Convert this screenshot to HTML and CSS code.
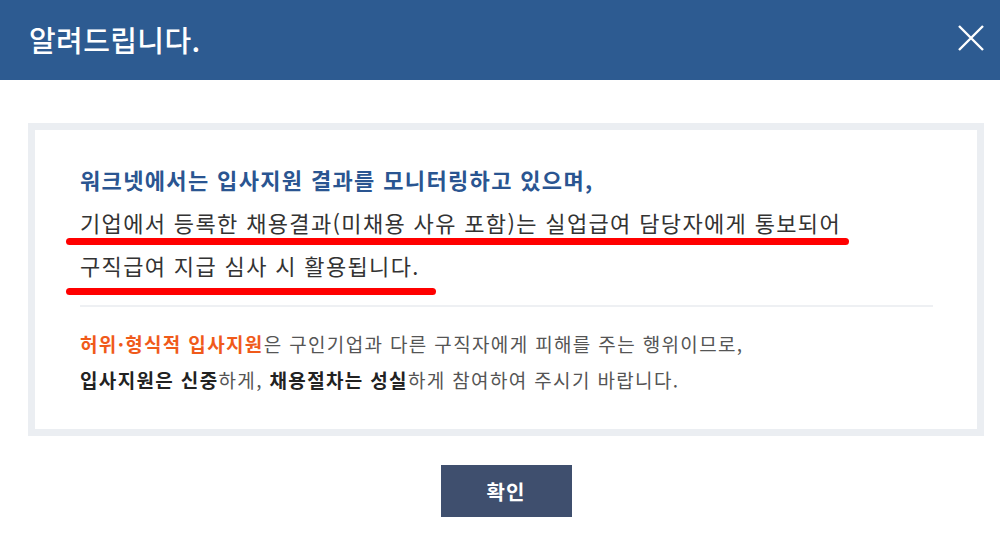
FILE: index.html
```html
<!DOCTYPE html>
<html lang="ko">
<head>
<meta charset="utf-8">
<title>알려드립니다.</title>
<link rel="stylesheet" href="styles.css">
</head>
<body>
<div class="modal">
  <header class="modal-head">
    <h1 class="modal-title">알려드립니다.</h1>
    <button class="close-btn" type="button" aria-label="닫기">
      <svg width="26" height="26" viewBox="0 0 26 26"><path d="M1 1 L25 25 M25 1 L1 25" stroke="#fff" stroke-width="2.4" fill="none"/></svg>
    </button>
  </header>
  <main class="modal-body">
    <section class="notice-box">
      <div class="notice-top">
        <p class="lead">워크넷에서는 입사지원 결과를 모니터링하고 있으며,</p>
        <p class="line"><span class="mark mark-a">기업에서 등록한 채용결과(미채용 사유 포함)는 실업급여 담당자에게 통보되어</span></p>
        <p class="line"><span class="mark mark-b">구직급여 지급 심사 시 활용됩니다.</span></p>
      </div>
      <div class="notice-bottom">
        <p class="sub"><strong class="warn">허위·형식적 입사지원</strong>은 구인기업과 다른 구직자에게 피해를 주는 행위이므로,</p>
        <p class="sub"><strong>입사지원은 신중</strong>하게, <strong>채용절차는 성실</strong>하게 참여하여 주시기 바랍니다.</p>
      </div>
    </section>
    <div class="actions">
      <button class="ok-btn" type="button">확인</button>
    </div>
  </main>
</div>
</body>
</html>
```
FILE: styles.css
```css
* { box-sizing: border-box; }
html, body { margin: 0; padding: 0; background: #fff; }
body {
  font-family: "Noto Sans CJK KR", "Noto Sans", sans-serif;
  width: 1000px;
  height: 551px;
  overflow: hidden;
}
.modal-head {
  height: 80px;
  background: #2d5b91;
  display: flex;
  align-items: center;
  justify-content: space-between;
  padding: 0 16px 0 29px;
}
.modal-title {
  margin: 0 0 2px;
  color: #fff;
  font-size: 29px;
  font-weight: 500;
  letter-spacing: 0.4px;
}
.close-btn {
  background: none;
  border: 0;
  padding: 0;
  width: 26px;
  height: 26px;
  display: flex;
  margin-top: -4px;
}
.modal-body {
  padding: 43px 16px 0 28px;
}
.notice-box {
  width: 956px;
  height: 313px;
  border: 7px solid #ebeef2;
  padding: 0 44px 0 45px;
}
.notice-top {
  padding-top: 28px;
  padding-bottom: 18px;
  border-bottom: 2px solid #eef0f3;
}
.notice-top p {
  margin: 0;
  line-height: 43px;
  font-size: 22px;
  letter-spacing: 1.35px;
}
.lead {
  color: #2a5591;
  font-weight: 700;
}
.line { color: #333; }
.mark {
  position: relative;
  display: inline-block;
}
.mark::after {
  content: "";
  position: absolute;
  left: -14px;
  height: 7px;
  border-radius: 4px;
  background: #ff0000;
}
.mark-a::after { right: -8px; top: 37px; }
.mark-b::after { right: -16px; top: 44px; }
.notice-bottom {
  padding-top: 19px;
}
.sub {
  margin: 0;
  font-size: 19px;
  line-height: 36px;
  letter-spacing: 1.35px;
  color: #555;
}
.sub strong {
  font-weight: 700;
  color: #222;
}
.sub strong.warn { color: #f05a1a; }
.actions {
  display: flex;
  justify-content: center;
  padding-top: 29px;
}
.ok-btn {
  width: 131px;
  height: 52px;
  border: 0;
  background: #3f4f6e;
  color: #fff;
  font-family: inherit;
  font-size: 20px;
  font-weight: 700;
  letter-spacing: 1px;
}
```
